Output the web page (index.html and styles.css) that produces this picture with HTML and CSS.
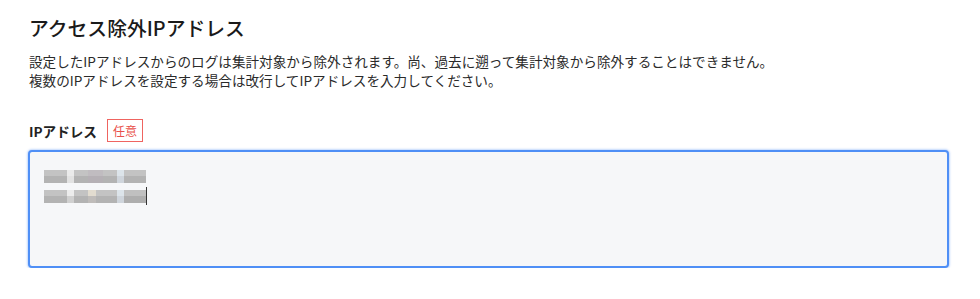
FILE: index.html
```html
<!DOCTYPE html>
<html lang="ja">
<head>
<meta charset="utf-8">
<link rel="stylesheet" href="styles.css">
</head>
<body>
<div class="page">
  <h1 class="title">アクセス除外IPアドレス</h1>
  <p class="desc">設定したIPアドレスからのログは集計対象から除外されます。尚、過去に遡って集計対象から除外することはできません。<br>複数のIPアドレスを設定する場合は改行してIPアドレスを入力してください。</p>
  <div class="field-head">
    <span class="label">IPアドレス</span>
    <span class="badge">任意</span>
  </div>
  <div class="textarea">
    <div class="line">
      <span class="blk w23"></span><span class="blk lite w7"></span><span class="blk w14"></span><span class="blk mid w15"></span><span class="blk w14"></span><span class="blk blue w7"></span><span class="blk w22"></span>
    </div>
    <div class="line">
      <span class="blk w23"></span><span class="blk lite2 w7"></span><span class="blk w14"></span><span class="blk beige w8"></span><span class="blk w21"></span><span class="blk blue w7"></span><span class="blk dark w22"></span><span class="caret"></span>
    </div>
  </div>
</div>
</body>
</html>
```
FILE: styles.css
```css
html, body {
  margin: 0;
  padding: 0;
  background: #ffffff;
}
body {
  font-family: "Noto Sans CJK JP", "Noto Sans", sans-serif;
  color: #222222;
}
.page {
  padding: 13px 31px 0 28px;
}
.title {
  margin: 0 0 0 1px;
  font-size: 19.8px;
  font-weight: 500;
  line-height: 30px;
  color: #1a1a1a;
}
.desc {
  margin: 9px 0 0 1px;
  font-size: 13.6px;
  line-height: 19px;
  color: #2a2a2a;
}
.field-head {
  display: flex;
  align-items: center;
  gap: 10px;
  margin: 29px 0 0 1px;
  height: 23px;
}
.label {
  font-size: 13.6px;
  font-weight: 700;
  color: #222222;
}
.badge {
  box-sizing: border-box;
  height: 23px;
  padding: 0 5px;
  border: 1px solid #ef6460;
  color: #e9504b;
  font-size: 12px;
  line-height: 21px;
}
.textarea {
  box-sizing: border-box;
  margin-top: 8px;
  height: 118px;
  border: 2px solid #4f8ff6;
  border-radius: 4px;
  background: #f6f7f9;
  box-shadow: 0 0 2px 1px rgba(79, 143, 246, 0.35);
  padding: 14px 14px;
}
.line {
  display: flex;
  align-items: center;
  height: 20px;
}
.blk {
  display: block;
  height: 13px;
  background: linear-gradient(#c3c3c3 0 50%, #b3b3b3 50% 100%);
}
.blk.lite { background: linear-gradient(#eaeaea 0 50%, #e2e2e2 50% 100%); }
.blk.lite2 { background: linear-gradient(#ececec 0 50%, #d0d0d0 50% 100%); }
.blk.mid { background: linear-gradient(#c0bcc0 0 50%, #b5b0b5 50% 100%); }
.blk.blue { background: linear-gradient(#dce4ea 0 50%, #cfd5dc 50% 100%); }
.blk.beige { background: linear-gradient(#e2dcd0 0 50%, #bfbcba 50% 100%); }
.blk.dark { background: linear-gradient(#c0c0c0 0 50%, #aeaeae 50% 100%); }
.w7 { width: 7px; }
.w8 { width: 8px; }
.w14 { width: 14px; }
.w15 { width: 15px; }
.w21 { width: 21px; }
.w22 { width: 22px; }
.w23 { width: 23px; }
.caret {
  display: block;
  width: 1px;
  height: 18px;
  background: #333333;
}
```
